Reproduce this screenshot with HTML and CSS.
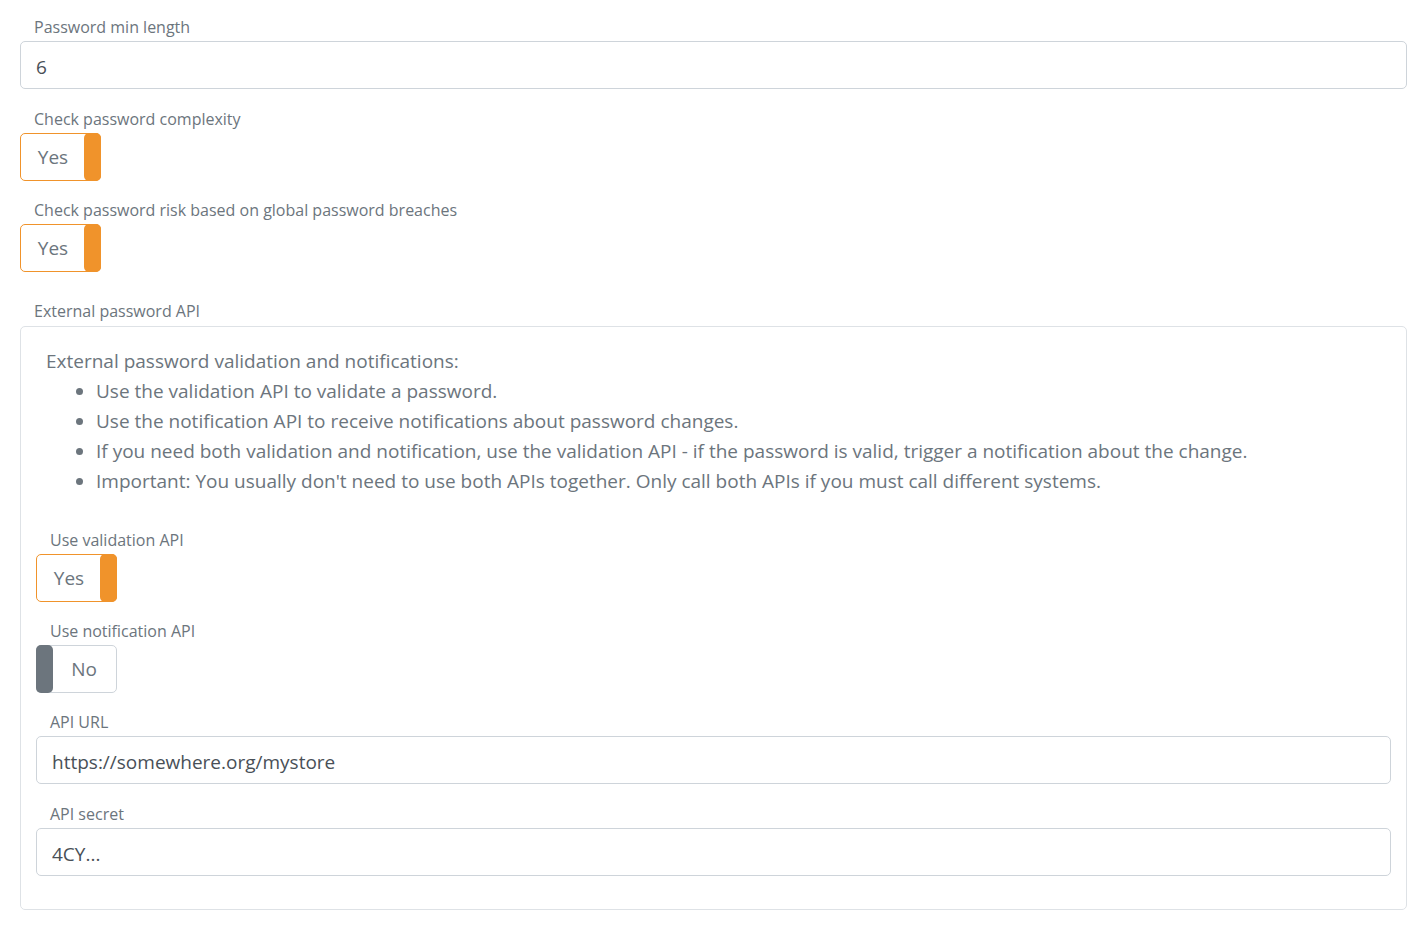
FILE: index.html
```html
<!DOCTYPE html>
<html lang="en">
  <head>
    <meta charset="UTF-8" />
    <meta name="viewport" content="width=device-width, initial-scale=1.0" />
    <title>Password settings</title>
    <link rel="stylesheet" href="styles.css">
  </head>
  <body>
    <div class="form-group first">
      <label class="field-label" for="minLength">Password min length</label>
      <input class="form-control" type="text" id="minLength" value="6" />
    </div>

    <div class="form-group">
      <div class="field-label">Check password complexity</div>
      <div class="toggle on">
        <span class="toggle-text">Yes</span>
        <span class="toggle-handle"></span>
      </div>
    </div>

    <div class="form-group">
      <div class="field-label">Check password risk based on global password breaches</div>
      <div class="toggle on">
        <span class="toggle-text">Yes</span>
        <span class="toggle-handle"></span>
      </div>
    </div>

    <div class="section">
      <div class="field-label">External password API</div>
      <div class="section-box">
        <div class="intro">
          External password validation and notifications:
          <ul>
            <li>Use the validation API to validate a password.</li>
            <li>Use the notification API to receive notifications about password changes.</li>
            <li>If you need both validation and notification, use the validation API - if the password is valid, trigger a notification about the change.</li>
            <li>Important: You usually don't need to use both APIs together. Only call both APIs if you must call different systems.</li>
          </ul>
        </div>

        <div class="form-group">
          <div class="field-label">Use validation API</div>
          <div class="toggle on">
            <span class="toggle-text">Yes</span>
            <span class="toggle-handle"></span>
          </div>
        </div>

        <div class="form-group">
          <div class="field-label">Use notification API</div>
          <div class="toggle off">
            <span class="toggle-handle"></span>
            <span class="toggle-text">No</span>
          </div>
        </div>

        <div class="form-group first">
          <label class="field-label" for="apiUrl">API URL</label>
          <input class="form-control" type="text" id="apiUrl" value="https://somewhere.org/mystore" />
        </div>

        <div class="form-group">
          <label class="field-label" for="apiSecret">API secret</label>
          <input class="form-control" type="text" id="apiSecret" value="4CY..." />
        </div>
      </div>
    </div>
  </body>
</html>
```

FILE: styles.css
```css
body {
  font-family: "Open Sans", "Noto Sans", Arial, sans-serif;
  margin: 0;
  padding: 17px 16px 0 20px;
  background-color: #fff;
  color: #6c757d;
}

.form-group {
  margin-bottom: 19px;
}

.form-group.first {
  margin-bottom: 20px;
}

.field-label {
  display: block;
  font-size: 16px;
  line-height: 20px;
  padding-bottom: 4px;
  padding-left: 14px;
  color: #6c757d;
}

.form-control {
  display: block;
  box-sizing: border-box;
  width: 100%;
  height: 48px;
  margin: 0;
  padding: 10px 15px 6px 15px;
  font-family: inherit;
  font-size: 19px;
  color: #495057;
  background-color: #fff;
  border: 1px solid #ced4da;
  border-radius: 5px;
  outline: none;
}

.toggle {
  display: flex;
  box-sizing: border-box;
  width: 81px;
  height: 48px;
  border: 1px solid #ced4da;
  border-radius: 5px;
  background-color: #fff;
}

.toggle.on {
  border-color: #f0932b;
}

.toggle-text {
  flex: 1;
  text-align: center;
  font-size: 19px;
  line-height: 46px;
  color: #6c757d;
}

.toggle-handle {
  width: 17px;
  margin: -1px;
  border-radius: 5px;
}

.toggle.on .toggle-handle {
  background-color: #f0932b;
}

.toggle.off .toggle-handle {
  background-color: #6c757d;
}

.section {
  margin-top: 29px;
}

.section-box {
  border: 1px solid #dee2e6;
  border-radius: 5px;
  padding: 19px 15px 14px 15px;
  margin-top: 1px;
}

.intro {
  font-size: 19px;
  line-height: 30px;
  padding-left: 10px;
  margin-bottom: 34px;
}

.intro ul {
  margin: 0;
  padding-left: 50px;
}
```
